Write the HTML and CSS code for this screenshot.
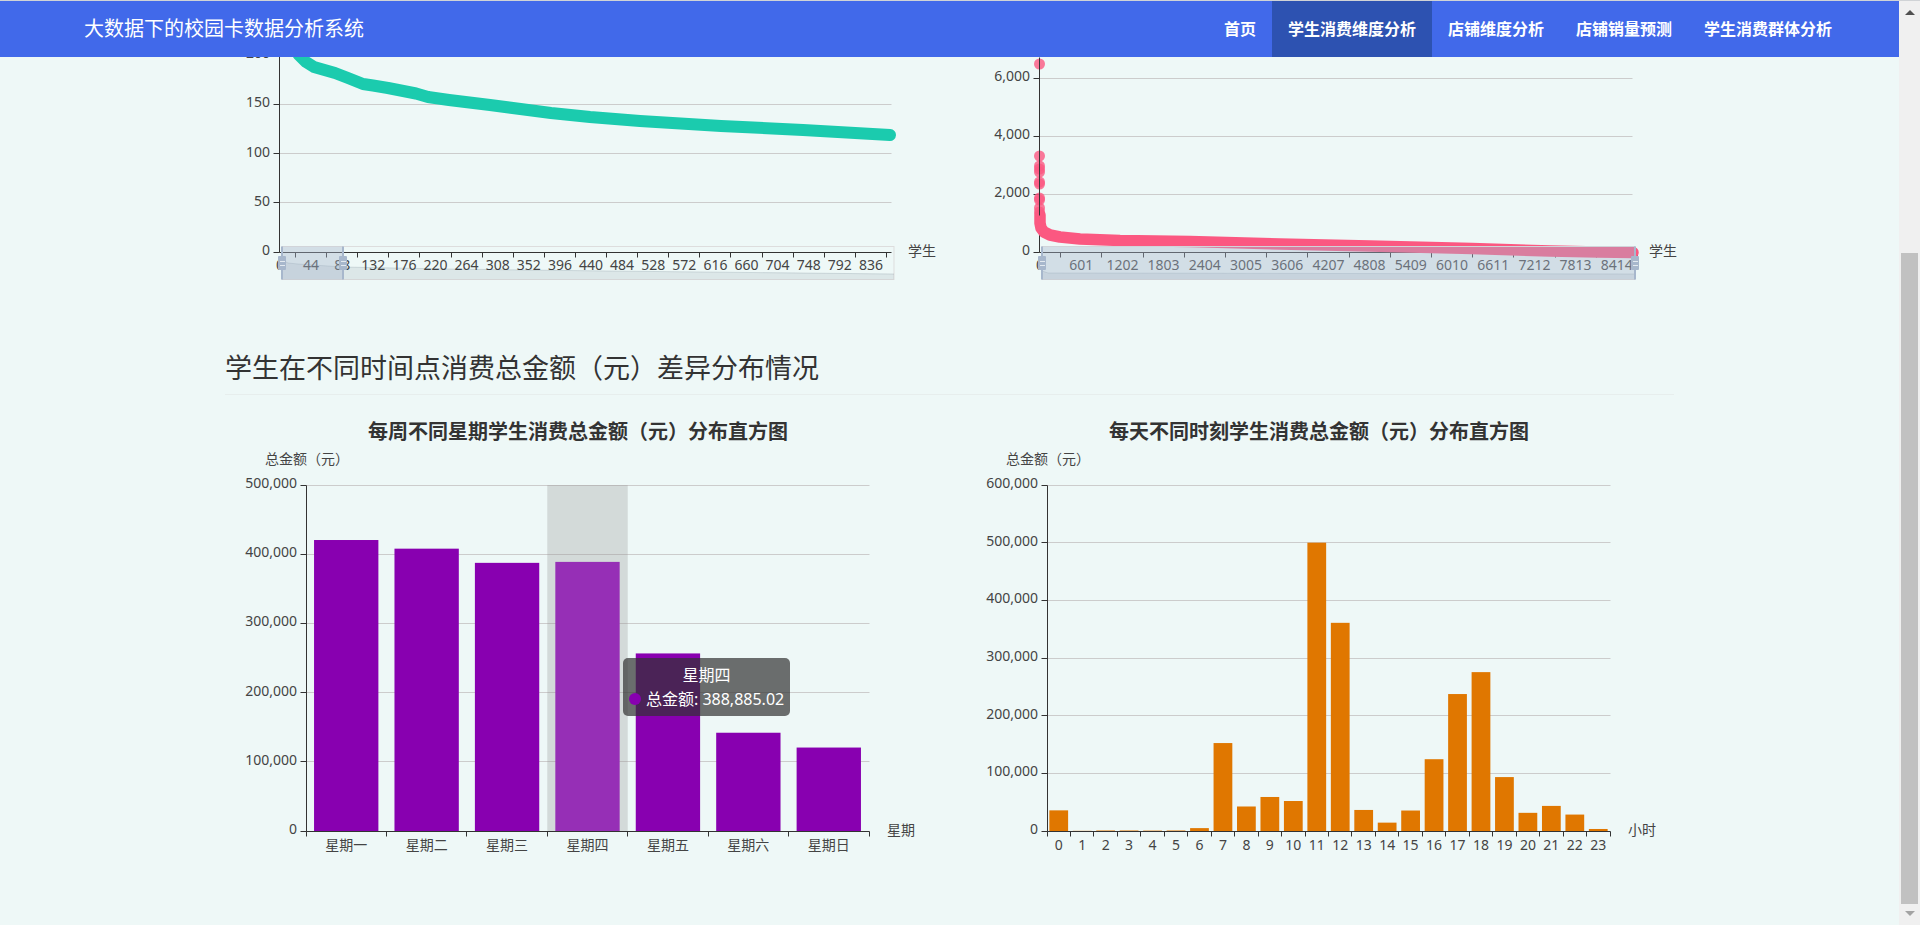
FILE: index.html
```html
<!DOCTYPE html>
<html lang="zh-CN">
<head>
<meta charset="utf-8">
<title>大数据下的校园卡数据分析系统</title>
<link rel="stylesheet" href="styles.css">
</head>
<body>
<div class="page">
  <header class="navbar">
    <a class="brand" href="#">大数据下的校园卡数据分析系统</a>
    <nav class="menu">
      <a class="menu-item" href="#">首页</a>
      <a class="menu-item active" href="#">学生消费维度分析</a>
      <a class="menu-item" href="#">店铺维度分析</a>
      <a class="menu-item" href="#">店铺销量预测</a>
      <a class="menu-item" href="#">学生消费群体分析</a>
    </nav>
  </header>
  <main class="content">
    <section class="charts">
      <figure class="chart"><svg id="rank-top" viewBox="0 0 741 243"></svg></figure>
      <figure class="chart"><svg id="rank-all" viewBox="0 0 741 243"></svg></figure>
    </section>
    <h2 class="section-title">学生在不同时间点消费总金额（元）差异分布情况</h2>
    <section class="charts">
      <figure class="chart">
        <svg id="by-week" viewBox="0 0 741 526"></svg>
        <div class="tooltip">
          <div class="tooltip-title">星期四</div>
          <div class="tooltip-row"><span class="dot"></span><span>总金额: 388,885.02</span></div>
        </div>
      </figure>
      <figure class="chart"><svg id="by-hour" viewBox="0 0 741 526"></svg></figure>
    </section>
  </main>
</div>
<aside class="scrollbar" aria-hidden="true">
  <svg class="arrow" viewBox="0 0 21 21"><path d="M6 14h10l-5-5z" fill="#505050"/></svg>
  <div class="track-gap"></div>
  <div class="thumb"></div>
  <svg class="arrow" viewBox="0 0 21 21"><path d="M6 7h10l-5 5z" fill="#a3a3a3"/></svg>
</aside>
<script src="charts.js"></script>
</body>
</html>
```

FILE: styles.css
```css
* {
  box-sizing: border-box;
}

body {
  margin: 0;
  height: 100vh;
  display: grid;
  grid-template-columns: minmax(0, 1fr) 21px;
  grid-template-rows: minmax(0, 1fr);
  overflow: hidden;
  border-top: 1px solid #d0d3d6;
  background: #eef8f7;
  color: #333;
  font-family: "Noto Sans", "Noto Sans CJK SC", sans-serif;
  font-size: 14px;
}

.page {
  min-width: 0;
  overflow: hidden;
}

.navbar {
  height: 56px;
  padding: 0 51px 0 84px;
  display: flex;
  justify-content: space-between;
  background: #4169ea;
}

.brand {
  color: #fff;
  font-size: 20px;
  line-height: 56px;
  text-decoration: none;
  white-space: nowrap;
}

.menu {
  display: flex;
}

.menu-item {
  padding: 0 16px;
  color: #fff;
  font-size: 16px;
  font-weight: 700;
  line-height: 56px;
  text-decoration: none;
  white-space: nowrap;
}

.menu-item.active {
  background: #2d52b1;
}

.content {
  max-width: 1483px;
  margin: 0 auto;
}

.charts {
  display: grid;
  grid-template-columns: repeat(2, minmax(0, 1fr));
  column-gap: 1px;
}

.chart {
  position: relative;
  margin: 0;
}

.chart svg {
  display: block;
  width: 100%;
}

.section-title {
  margin: 49px 17px 0;
  padding-bottom: 7px;
  border-bottom: 1px solid #e7eeed;
  font-size: 27px;
  font-weight: 400;
  line-height: 38px;
}

.chart-title {
  font-size: 20px;
  font-weight: 700;
  fill: #333;
}

.label {
  font-size: 14px;
  fill: #444;
}

.grid-line {
  stroke: #ccc;
}

.axis {
  stroke: #333;
}

.tooltip {
  position: absolute;
  left: 56%;
  top: 50%;
  padding: 5px 6px;
  border-radius: 5px;
  background: rgba(50, 50, 50, 0.7);
  color: #fff;
  font-size: 16px;
  line-height: 24px;
  white-space: nowrap;
}

.tooltip-title {
  text-align: center;
}

.tooltip-row {
  display: flex;
  align-items: center;
  gap: 5px;
}

.dot {
  width: 12px;
  height: 12px;
  border-radius: 50%;
  background: #8800b0;
}

.scrollbar {
  display: flex;
  flex-direction: column;
  background: #f0f0f0;
}

.arrow {
  display: block;
  flex: none;
  width: 21px;
  height: 21px;
}

.track-gap {
  flex: 231;
}

.thumb {
  flex: 651;
  margin: 0 2px;
  background: #c1c1c1;
}
```

FILE: charts.js
```js
const NS = 'http://www.w3.org/2000/svg';

function add(parent, tag, attrs, text) {
  const node = document.createElementNS(NS, tag);
  for (const key in attrs) node.setAttribute(key, attrs[key]);
  if (text !== undefined) node.textContent = text;
  parent.appendChild(node);
  return node;
}

function line(svg, cls, x1, y1, x2, y2) {
  const o = 0.5;
  add(svg, 'line', {
    class: cls,
    x1: Math.floor(x1) + o, y1: Math.floor(y1) + o,
    x2: Math.floor(x2) + o, y2: Math.floor(y2) + o
  });
}

function label(svg, x, y, text, anchor, cls) {
  add(svg, 'text', { class: cls || 'label', x: x, y: y, 'text-anchor': anchor || 'middle' }, text);
}

function gridLines(svg, box, max, step) {
  for (let v = step; v <= max; v += step) {
    const y = box.bottom - (v / max) * (box.bottom - box.top);
    line(svg, 'grid-line', box.left, y, box.right, y);
  }
}

function yAxis(svg, box, max, step) {
  line(svg, 'axis', box.left, box.top, box.left, box.bottom);
  for (let v = 0; v <= max; v += step) {
    const y = box.bottom - (v / max) * (box.bottom - box.top);
    line(svg, 'axis', box.left - 6, y, box.left, y);
    label(svg, box.left - 9, Math.round(y) + 3, v.toLocaleString('en-US'), 'end');
  }
}

function barChart(id, o) {
  const svg = document.getElementById(id);
  const box = { left: o.left, right: o.left + 563, top: 90, bottom: 436 };
  const band = (box.right - box.left) / o.values.length;
  label(svg, o.left + 272, 44, o.title, 'middle', 'chart-title');
  label(svg, o.left - 41, 69, '总金额（元）', 'start');
  gridLines(svg, box, o.max, 100000);
  if (o.hover !== undefined) {
    add(svg, 'rect', {
      x: box.left + band * o.hover, y: box.top, width: band,
      height: box.bottom - box.top, fill: 'rgba(150,150,150,0.3)'
    });
  }
  o.values.forEach((v, i) => {
    const h = (v / o.max) * (box.bottom - box.top);
    add(svg, 'rect', {
      x: box.left + band * (i + 0.1), y: box.bottom - h,
      width: band * 0.8, height: h, fill: i === o.hover ? '#962fb6' : o.color
    });
  });
  yAxis(svg, box, o.max, 100000);
  line(svg, 'axis', box.left, box.bottom, box.right, box.bottom);
  for (let i = 0; i <= o.values.length; i++) {
    const x = box.left + band * i;
    line(svg, 'axis', x, box.bottom, x, box.bottom + 5);
    if (i < o.values.length) label(svg, x + band / 2, 455, o.names[i]);
  }
  label(svg, box.right + 18, 440, o.unit, 'start');
}

function slider(svg, x1, x2, sel, shadow) {
  const top = 189.5, bottom = 222.5;
  add(svg, 'rect', { x: x1, y: top, width: x2 - x1, height: bottom - top, fill: 'none', stroke: '#ddd' });
  const pts = shadow.map(p => p.join(',')).join(' ');
  add(svg, 'polygon', { points: `${x1},${bottom} ${pts} ${x2},${bottom}`, fill: 'rgba(47,69,84,0.09)' });
  add(svg, 'polyline', { points: pts, fill: 'none', stroke: 'rgba(47,69,84,0.15)' });
  add(svg, 'rect', { x: x1, y: top, width: sel - x1, height: bottom - top, fill: 'rgba(167,183,204,0.4)' });
  [x1, sel].forEach(x => {
    add(svg, 'path', { d: `M${x} ${top}V${bottom}`, stroke: '#a7b7cc', 'stroke-width': 2 });
    add(svg, 'rect', { x: x - 4, y: 199, width: 8, height: 14, rx: 1, fill: '#a7b7cc' });
    add(svg, 'path', { d: `M${x - 2} 204.5h5M${x - 2} 208.5h5`, stroke: '#e3eaf0' });
  });
}

function curve(svg, color, width, points) {
  add(svg, 'polyline', {
    points: points.map(p => p.join(',')).join(' '), fill: 'none', stroke: color,
    'stroke-width': width, 'stroke-linecap': 'round', 'stroke-linejoin': 'round'
  });
}

function rankChart(id, o) {
  const svg = document.getElementById(id);
  const box = { left: o.left, right: o.right, top: o.top, bottom: 195 };
  gridLines(svg, box, o.max, o.step);
  yAxis(svg, box, o.max, o.step);
  line(svg, 'axis', box.left, box.bottom, box.right, box.bottom);
  for (let i = 0; i < o.count; i++) {
    const x = box.left + 1 + o.band * i;
    line(svg, 'axis', x + o.band / 2, box.bottom, x + o.band / 2, box.bottom + 5);
    label(svg, x, 213, String(o.interval * i));
  }
  o.dots.forEach(y => add(svg, 'circle', { cx: box.left + 0.5, cy: y, r: 5.5, fill: o.color, opacity: 0.8 }));
  curve(svg, o.color, o.width, o.points);
  label(svg, o.right + 17, 199, '学生', 'start');
  slider(svg, o.slider[0], o.slider[1], o.slider[2], o.shadow);
}

rankChart('rank-top', {
  left: 71, right: 683, top: -2, max: 200, step: 50,
  band: 31.1, count: 20, interval: 44, color: '#1bcbae', width: 12, dots: [],
  points: [[72, -30], [81, -15], [91, -2], [98, 5], [106, 10], [127, 16], [140, 21], [155, 27], [165, 28.5],
    [180, 31], [208, 36.5], [220, 40], [241, 43], [282, 48], [343, 56], [382, 60], [432, 64], [513, 69],
    [595, 73], [682, 78]],
  slider: [74, 686, 135],
  shadow: [[74, 203], [80, 206], [90, 207], [135, 210], [240, 212], [400, 214], [686, 217]]
});

rankChart('rank-all', {
  left: 89, right: 682, top: 21, max: 6000, step: 2000,
  band: 41.2, count: 15, interval: 601, color: '#fb5881', width: 11.5,
  dots: [7, 99, 109, 112, 115, 125, 127, 141, 143, 151, 155],
  points: [[90, 158], [90, 166], [91, 171], [94, 175], [100, 178], [110, 180], [130, 182], [170, 183.5],
    [240, 184.5], [330, 187], [420, 189], [522, 191.5], [600, 194], [648, 195], [683, 195.5]],
  slider: [92, 685, 685],
  shadow: [[92, 214], [98, 216], [685, 217]]
});

line(document.getElementById('rank-all'), 'axis', 89, 0, 89, 158);

barChart('by-week', {
  left: 98, max: 500000, color: '#8800b0', hover: 3, unit: '星期',
  title: '每周不同星期学生消费总金额（元）分布直方图',
  names: ['星期一', '星期二', '星期三', '星期四', '星期五', '星期六', '星期日'],
  values: [420500, 408000, 387500, 388885.02, 256600, 142000, 120600]
});

barChart('by-hour', {
  left: 97, max: 600000, color: '#e07700', unit: '小时',
  title: '每天不同时刻学生消费总金额（元）分布直方图',
  names: Array.from({ length: 24 }, (_, i) => String(i)),
  values: [35800, 300, 900, 900, 700, 900, 5000, 152500, 42500, 59000, 52000, 500000,
    361000, 36500, 14500, 35500, 124500, 237500, 275500, 93500, 31500, 43500, 28500, 3500]
});
```
